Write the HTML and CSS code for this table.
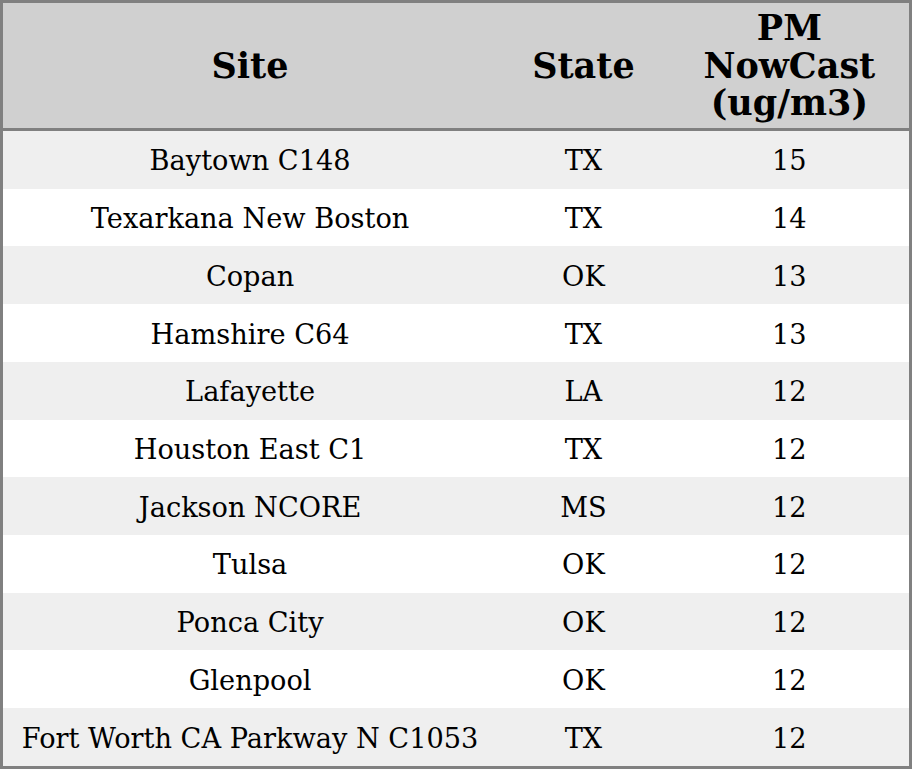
FILE: index.html
```html
<!DOCTYPE html>
<html>
<head>
<meta charset="utf-8">
<link rel="stylesheet" href="styles.css">
</head>
<body>
<table class="aq">
  <colgroup>
    <col class="c-site">
    <col class="c-state">
    <col class="c-pm">
  </colgroup>
  <thead>
    <tr><th>Site</th><th>State</th><th>PM<br>NowCast<br>(ug/m3)</th></tr>
  </thead>
  <tbody>
    <tr><td>Baytown C148</td><td>TX</td><td>15</td></tr>
    <tr><td>Texarkana New Boston</td><td>TX</td><td>14</td></tr>
    <tr><td>Copan</td><td>OK</td><td>13</td></tr>
    <tr><td>Hamshire C64</td><td>TX</td><td>13</td></tr>
    <tr><td>Lafayette</td><td>LA</td><td>12</td></tr>
    <tr><td>Houston East C1</td><td>TX</td><td>12</td></tr>
    <tr><td>Jackson NCORE</td><td>MS</td><td>12</td></tr>
    <tr><td>Tulsa</td><td>OK</td><td>12</td></tr>
    <tr><td>Ponca City</td><td>OK</td><td>12</td></tr>
    <tr><td>Glenpool</td><td>OK</td><td>12</td></tr>
    <tr><td>Fort Worth CA Parkway N C1053</td><td>TX</td><td>12</td></tr>
  </tbody>
</table>
</body>
</html>
```
FILE: styles.css
```css
html, body {
  margin: 0;
  padding: 0;
  background: #ffffff;
}
.aq {
  width: 912px;
  height: 769px;
  border-collapse: collapse;
  border: 3px solid #808080;
  font-family: "DejaVu Serif", serif;
  color: #000;
  table-layout: fixed;
}
.c-site { width: 494px; }
.c-state { width: 172px; }
.c-pm { width: 240px; }
.aq th {
  background: #d0d0d0;
  font-weight: bold;
  font-size: 35px;
  line-height: 37.5px;
  height: 125px;
  padding: 0;
  text-align: center;
  vertical-align: middle;
  border-bottom: 3px solid #808080;
}
.aq td {
  font-size: 27.2px;
  height: 55px;
  padding: 2px 0 0 0;
  text-align: center;
  vertical-align: middle;
}
.aq tbody tr:nth-child(odd) td { background: #efefef; }
.aq tbody tr:nth-child(even) td { background: #ffffff; }
```
